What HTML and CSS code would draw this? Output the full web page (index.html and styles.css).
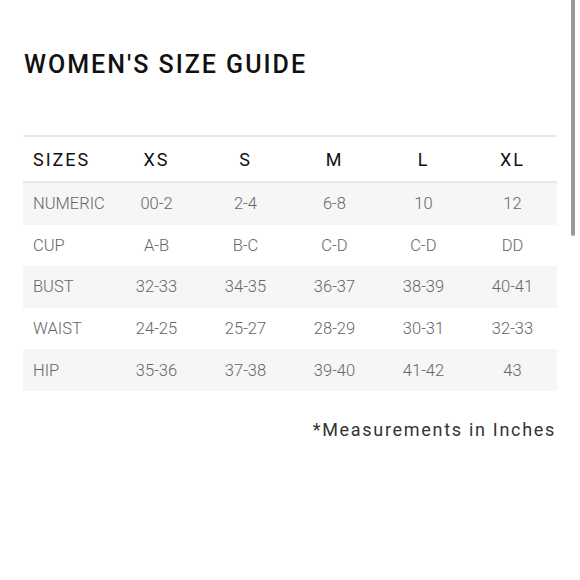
FILE: index.html
```html
<!DOCTYPE html>
<html>
<head>
<meta charset="utf-8">
<link rel="stylesheet" href="styles.css">
</head>
<body>
<div class="page">
  <h1 class="title">WOMEN'S SIZE GUIDE</h1>
  <table class="chart">
    <thead>
      <tr><th class="label">SIZES</th><th>XS</th><th>S</th><th>M</th><th>L</th><th>XL</th></tr>
    </thead>
    <tbody>
      <tr class="alt"><td class="label">NUMERIC</td><td>00-2</td><td>2-4</td><td>6-8</td><td>10</td><td>12</td></tr>
      <tr><td class="label">CUP</td><td>A-B</td><td>B-C</td><td>C-D</td><td>C-D</td><td>DD</td></tr>
      <tr class="alt"><td class="label">BUST</td><td>32-33</td><td>34-35</td><td>36-37</td><td>38-39</td><td>40-41</td></tr>
      <tr><td class="label">WAIST</td><td>24-25</td><td>25-27</td><td>28-29</td><td>30-31</td><td>32-33</td></tr>
      <tr class="alt"><td class="label">HIP</td><td>35-36</td><td>37-38</td><td>39-40</td><td>41-42</td><td>43</td></tr>
    </tbody>
  </table>
  <p class="note">*Measurements in Inches</p>
</div>
<div class="scrollbar"></div>
</body>
</html>
```
FILE: styles.css
```css
html, body {
  margin: 0;
  padding: 0;
  background: #ffffff;
}
body {
  font-family: Roboto, "Liberation Sans", sans-serif;
}
.page {
  padding: 50px 23px 0 23px;
}
.title {
  margin: 0 0 0 1px;
  font-size: 25px;
  font-weight: 500;
  letter-spacing: 2px;
  color: #111;
  line-height: 30px;
}
.chart {
  margin-top: 55px;
  width: 534px;
  border-collapse: collapse;
  table-layout: fixed;
}
.chart th {
  font-weight: 400;
  font-size: 18px;
  letter-spacing: 2px;
  color: #111;
  height: 44px;
  text-align: center;
  border-top: 2px solid #e8e8e8;
  border-bottom: 2px solid #e8e8e8;
  padding: 0;
}
.chart td {
  font-size: 16.5px;
  font-weight: 300;
  color: #666;
  height: 41.6px;
  text-align: center;
  padding: 0;
}
.chart .label {
  text-align: left;
  padding-left: 10px;
}
.chart tr.alt td {
  background: #f6f6f6;
}
.note {
  margin: 28px 1px 0 0;
  text-align: right;
  font-size: 18px;
  letter-spacing: 1.7px;
  color: #333;
}
.scrollbar {
  position: absolute;
  top: 0;
  left: 571px;
  width: 4px;
  height: 236px;
  background: #9a9a9a;
  border-radius: 0 0 2px 2px;
}
```
